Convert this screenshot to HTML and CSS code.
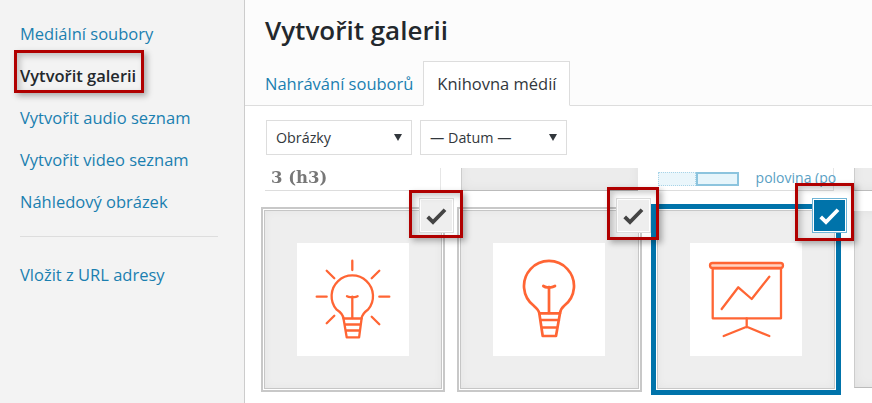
FILE: index.html
```html
<!DOCTYPE html>
<html lang="cs">
<head>
  <meta charset="UTF-8">
  <meta name="viewport" content="width=device-width, initial-scale=1">
  <title>Vytvořit galerii</title>
  <link rel="stylesheet" href="styles.css">
</head>
<body>
  <aside class="sidebar">
    <ul class="menu">
      <li><a href="#">Mediální soubory</a></li>
      <li class="current">Vytvořit galerii</li>
      <li><a href="#">Vytvořit audio seznam</a></li>
      <li><a href="#">Vytvořit video seznam</a></li>
      <li><a href="#">Náhledový obrázek</a></li>
    </ul>
    <div class="separator"></div>
    <ul class="menu">
      <li><a href="#">Vložit z URL adresy</a></li>
    </ul>
  </aside>

  <main class="content">
    <header class="head">
      <h1>Vytvořit galerii</h1>
      <div class="tabs">
        <a class="tab" href="#">Nahrávání souborů</a>
        <a class="tab active" href="#">Knihovna médií</a>
      </div>
    </header>

    <div class="filters">
      <div class="select"><span>Obrázky</span><i class="arrow"></i></div>
      <div class="select"><span>— Datum —</span><i class="arrow"></i></div>
    </div>

    <div class="browser">
      <div class="grid">
        <div class="card card-text"><span class="h3-sample">3 (h3)</span></div>
        <div class="card card-plain"></div>
        <div class="card card-text">
          <span class="size-sample"><i class="dotted"></i><i class="solid"></i></span>
          <span class="size-label">polovina (po</span>
        </div>
        <div class="card card-plain"></div>

        <div class="card picked">
          <div class="thumb">
            <svg width="112" height="113" viewBox="0 0 112 113" fill="none" stroke="#ff6534" stroke-width="2.300" stroke-linecap="round" stroke-linejoin="round">
              <path d="M55.3 17.7V27M82.3 53.7h10M19.7 53.7h10M74.7 35.3l7.6-7.6M29.7 27.7l7.6 7.6M29.7 80.3l7.6-7.6M74.7 73.7l7.6 7.6"/>
              <path d="M46.5 75.5c-.5-4-3-6.500-7-9a20.700 20.700 0 1 1 31.600 0c-3.600 2.500-6 5-6.500 9z"/>
              <path d="M46.500 75.500l3.200 18.800h12.400l2.500-18.800M47.800 81.500h16M48.800 87.500h14.200"/>
              <path d="M55.300 75V53.700M50 53.200c2 1.200 3.800 1.200 5.300.5 1.500.7 3.300.7 5.300-.5"/>
            </svg>
          </div>
          <button class="check"><svg width="31" height="31" viewBox="1 1 31 31" fill="none" stroke="#444" stroke-width="3.800"><path d="M7.700 17.800l5.300 5.300 12-12.400"/></svg></button>
        </div>

        <div class="card picked">
          <div class="thumb">
            <svg width="112" height="113" viewBox="0 0 112 113" fill="none" stroke="#ff6534" stroke-width="2.700" stroke-linecap="round" stroke-linejoin="round">
              <path d="M46.300 70.300c-.5-3.500-2.500-5-5.500-7.500a25 25 0 1 1 30.400 0c-3 2.500-3.700 4-4.200 7.500z"/>
              <path d="M46.300 70.300l3.400 22.700h13.300l4-22.700M47.500 77h18.500M48.500 84.500h16"/>
              <path d="M56 70V44.500M50.300 43c2 1.300 4.200 1.500 5.700 1 1.500.5 3.800.3 6-1"/>
            </svg>
          </div>
          <button class="check"><svg width="31" height="31" viewBox="1 1 31 31" fill="none" stroke="#444" stroke-width="3.800"><path d="M7.700 17.800l5.300 5.300 12-12.400"/></svg></button>
        </div>

        <div class="card selected">
          <div class="thumb">
            <svg width="112" height="113" viewBox="0 0 112 113" fill="none" stroke="#ff6534" stroke-width="2.300" stroke-linecap="round" stroke-linejoin="round">
              <rect x="20" y="20" width="73" height="5" rx="2.500" fill="#ffd3c3"/>
              <rect x="22.700" y="25.300" width="68.300" height="50"/>
              <path d="M31.700 66l16.600-21.700L61.700 56l17.600-22.300"/>
              <path d="M56.700 75.300v9M33.700 93l23-9.300L79.300 93"/>
            </svg>
          </div>
          <button class="check check-on"><svg width="31" height="31" viewBox="1 1 31 31" fill="none" stroke="#fff" stroke-width="3.800"><path d="M7.700 17.800l5.300 5.300 12-12.400"/></svg></button>
        </div>

        <div class="card card-plain"></div>
      </div>
    </div>
  </main>

  <div class="mark mark-menu"></div>
  <div class="mark mark-one"></div>
  <div class="mark mark-two"></div>
  <div class="mark mark-three"></div>
</body>
</html>
```

FILE: styles.css
```css
* {
  margin: 0;
  padding: 0;
  box-sizing: border-box;
}
html, body {
  height: 403px;
  overflow: hidden;
}
body {
  display: flex;
  background: #fff;
  color: #23282d;
  font-family: "Open Sans", "Liberation Sans", sans-serif;
  font-size: 16.5px;
}
a {
  color: #1a7fb0;
  text-decoration: none;
}

/* left menu */
.sidebar {
  flex: 0 0 245px;
  background: #f3f3f3;
  border-right: 1px solid #ccc;
  padding-top: 13px;
}
.menu {
  list-style: none;
}
.menu li {
  height: 42px;
  line-height: 42px;
  padding-left: 20px;
}
.menu .current {
  font-weight: 600;
}
.separator {
  height: 1px;
  margin: 13px 26px 17px 20px;
  background: #ddd;
}

/* right side */
.content {
  flex: 1;
  min-width: 0;
}
.head {
  height: 106px;
  background: #fcfcfc;
  border-bottom: 1px solid #ddd;
  padding-left: 20px;
}
h1 {
  font-size: 26px;
  font-weight: 600;
  line-height: 61px;
  height: 61px;
}
.tabs {
  display: flex;
  gap: 10px;
}
.tab {
  height: 45px;
  line-height: 46px;
}
.tab.active {
  width: 147px;
  text-align: center;
  color: #32373c;
  background: #fff;
  border: 1px solid #ddd;
  border-bottom: 1px solid #fff;
  line-height: 44px;
}
.filters {
  display: flex;
  gap: 8px;
  padding: 14px 0 13px 21px;
}
.select {
  width: 146px;
  height: 35px;
  padding: 0 9px;
  border: 1px solid #ddd;
  display: flex;
  align-items: center;
  justify-content: space-between;
  color: #32373c;
  font-size: 14.300px;
}
.select + .select {
  width: 147px;
}
.arrow {
  width: 0;
  height: 0;
  border-left: 4px solid transparent;
  border-right: 4px solid transparent;
  border-top: 7px solid #32373c;
}

/* attachments */
.browser {
  height: 235px;
  overflow: hidden;
}
.grid {
  display: grid;
  grid-template-columns: repeat(4, 176.300px);
  grid-auto-rows: 177px;
  gap: 20px;
  margin: -154px 0 0 20px;
}
.card {
  position: relative;
  background: #eee;
  box-shadow: inset 0 0 10px rgba(0, 0, 0, 0.04);
  display: flex;
  align-items: center;
  justify-content: center;
}
.card-plain {
  border-left: 1px solid #ccc;
  border-bottom: 1px solid #bbb;
  background: #ececec;
  box-shadow: inset 0 0 12px rgba(0, 0, 0, 0.05);
}
.card-text {
  background: #fff;
  box-shadow: none;
  border-bottom: 1px solid #ddd;
  border-right: 1px solid #e6e6e6;
  align-items: flex-end;
  justify-content: flex-start;
}
.h3-sample {
  font-family: "DejaVu Serif", serif;
  font-weight: 700;
  font-size: 16.500px;
  line-height: 24px;
  white-space: nowrap;
  color: #777;
  margin-left: 6px;
  filter: blur(0.4px);
}
.size-sample {
  display: flex;
  margin-bottom: 4px;
}
.dotted {
  width: 38px;
  height: 14px;
  background: #eaf6fb;
  border: 1px dotted #a8d4e8;
}
.solid {
  width: 43px;
  height: 14px;
  background: #e6f5fb;
  border: 2px solid #8cc4de;
}
.size-label {
  margin-left: 17px;
  font-size: 14px;
  line-height: 25px;
  white-space: nowrap;
  color: #5a9fc4;
}
.picked {
  box-shadow: inset 0 0 10px rgba(0, 0, 0, 0.04), 0 0 0 1px #c6c6c6, 0 0 0 2px #fff, 0 0 0 4px #c8c8c8;
}
.selected {
  box-shadow: inset 0 0 10px rgba(0, 0, 0, 0.04), 0 0 0 1px #c8c8c8, 0 0 0 2px #fff, 0 0 0 7px #0073aa;
}
.thumb {
  width: 112px;
  height: 113px;
  background: #fff;
}
.thumb svg {
  display: block;
  filter: blur(0.35px);
}
.check {
  position: absolute;
  top: -11px;
  right: -11px;
  width: 31px;
  height: 31px;
  border: 0;
  background: #eee;
  box-shadow: 0 0 0 1px #fff, 0 0 0 2px #ddd;
}
.check svg {
  display: block;
}
.check-on {
  background: #0073aa;
  box-shadow: 0 0 0 1px #fff, 0 0 0 2px #6fb4d6;
}

/* red annotation boxes drawn on top of the screenshot */
.mark {
  position: absolute;
  border: 3px solid #b00000;
  box-shadow: 3px 3px 6px rgba(0, 0, 0, 0.3), inset 3px 3px 6px rgba(0, 0, 0, 0.22);
}
.mark-menu {
  left: 14px;
  top: 50px;
  width: 130px;
  height: 43px;
}
.mark-one {
  left: 409px;
  top: 190px;
  width: 54px;
  height: 48px;
}
.mark-two {
  left: 607px;
  top: 187px;
  width: 52px;
  height: 53px;
}
.mark-three {
  left: 795px;
  top: 183px;
  width: 59px;
  height: 58px;
}
```
